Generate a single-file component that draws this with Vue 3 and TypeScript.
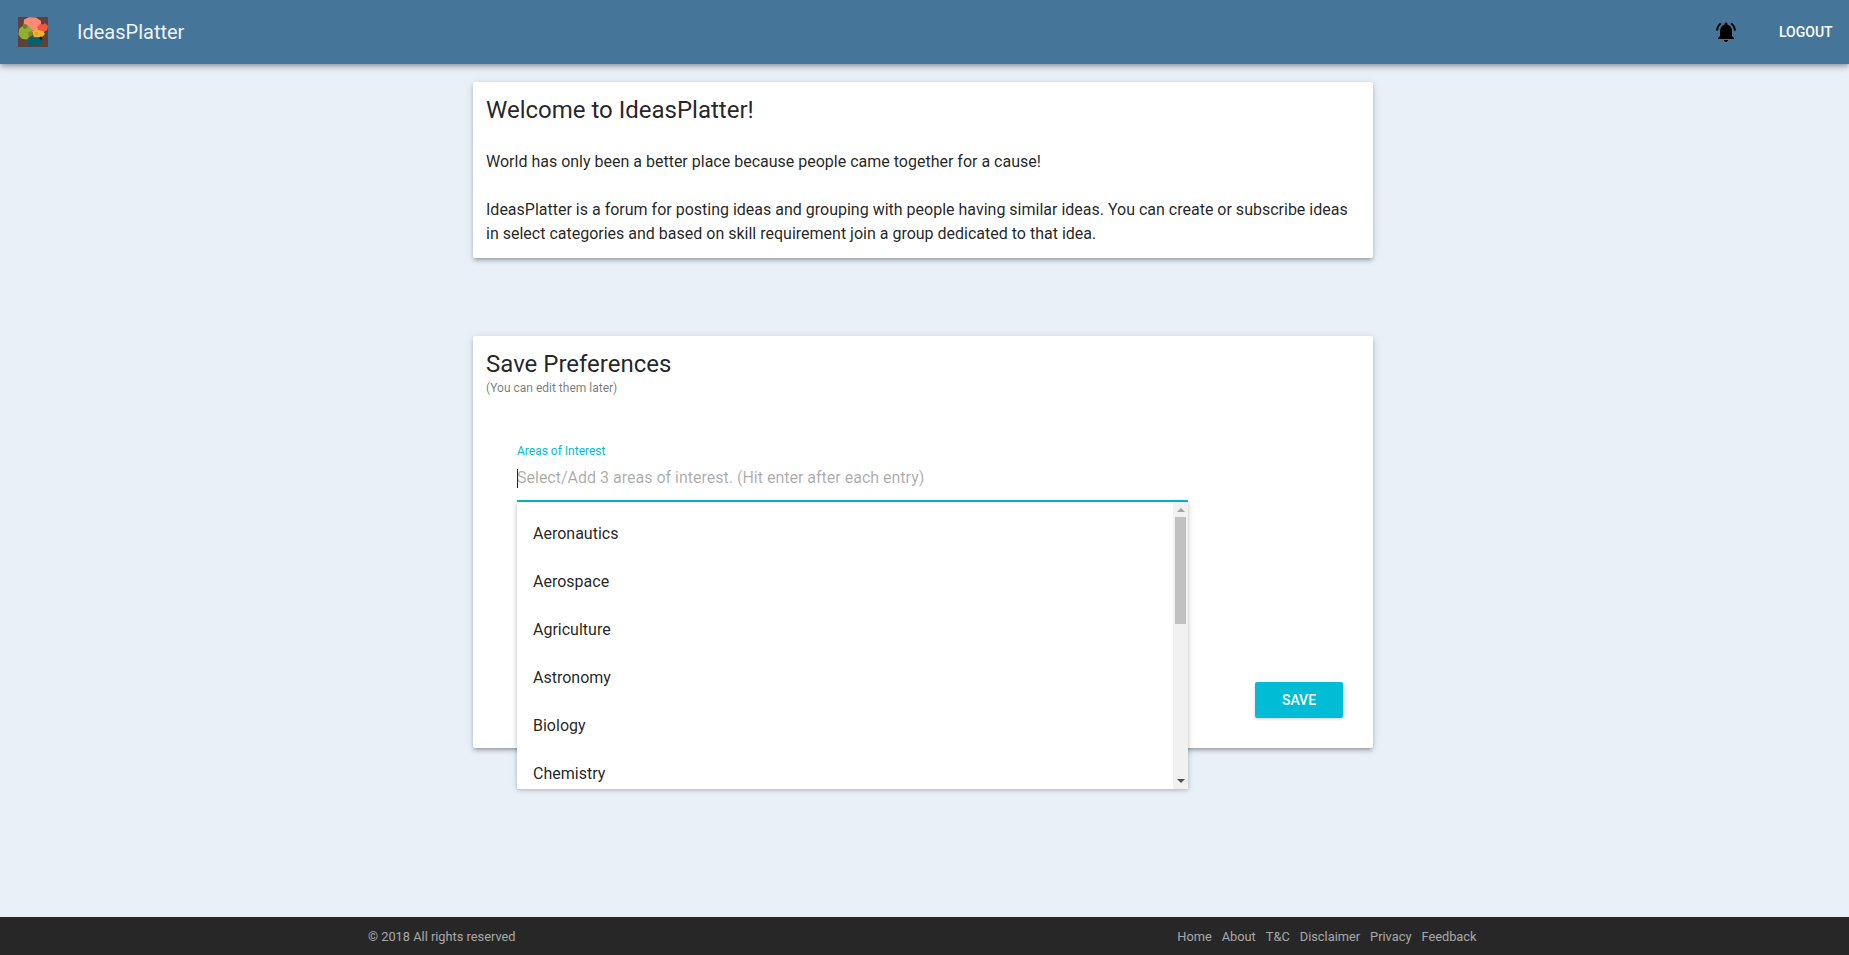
<script setup lang="ts">
const categories: string[] = ['Aeronautics', 'Aerospace', 'Agriculture', 'Astronomy', 'Biology', 'Chemistry']
const links: string[] = ['Home', 'About', 'T&C', 'Disclaimer', 'Privacy', 'Feedback']
</script>

<template>
  <div class="page">
    <header class="bar">
      <svg class="logo" width="30" height="30" viewBox="0 0 30 30">
        <rect width="30" height="30" fill="#5d4040" />
        <path d="M6 2.5 11 0.3 18 0.5 23 4 23 9 20 13 10 14 5.5 9Z" fill="#ff8a75" />
        <path d="M19 10 22 7 25 7.5 27 6 30 9 29 13 25.5 15.5 21 14Z" fill="#f4573c" />
        <path d="M1 12 5 8.5 10 8 14 13 13 18 9 22.5 4 22 0.5 18Z" fill="#8fb02f" />
        <circle cx="7" cy="9.5" r="2.4" fill="#7c7a28" />
        <path d="M14 14 18 12.5 25 14 27 17 24 20 16 20.5Z" fill="#f0b42f" />
        <circle cx="12.5" cy="17" r="2.4" fill="#84842a" />
        <circle cx="18.5" cy="16.5" r="1.8" fill="#e39a2a" />
        <path d="M10 23 13 20 20 20.5 24 21 24 25 22 29 11 29.3 9 26Z" fill="#05606e" />
        <circle cx="23" cy="21" r="1.6" fill="#1a1a1a" />
      </svg>
      <div class="brand">IdeasPlatter</div>
      <div class="spacer"></div>
      <svg class="bell" width="24" height="24" viewBox="0 0 24 24">
        <path
          fill="#000"
          d="M7.58 4.08 6.15 2.65C3.75 4.48 2.17 7.3 2.03 10.5h2c.15-2.65 1.51-4.97 3.55-6.42zM19.97 10.5h2c-.15-3.2-1.73-6.02-4.12-7.85l-1.42 1.43c2.02 1.45 3.39 3.77 3.54 6.42zM18 11c0-3.07-1.64-5.64-4.5-6.32V4c0-.83-.67-1.5-1.5-1.5s-1.5.67-1.5 1.5v.68C7.63 5.36 6 7.92 6 11v5l-2 2v1h16v-1l-2-2v-5zm-6 11c.14 0 .27-.01.4-.04.65-.14 1.18-.58 1.44-1.18.1-.24.15-.5.15-.78h-4c.01 1.1.9 2 2.01 2z"
        />
      </svg>
      <div class="logout">LOGOUT</div>
    </header>

    <main class="main">
      <section class="card welcome">
        <h2 class="title">Welcome to IdeasPlatter!</h2>
        <p class="copy">World has only been a better place because people came together for a cause!</p>
        <p class="copy">IdeasPlatter is a forum for posting ideas and grouping with people having similar ideas. You can create or subscribe ideas in select categories and based on skill requirement join a group dedicated to that idea.</p>
      </section>

      <section class="card prefs">
        <h2 class="title">Save Preferences</h2>
        <div class="hint">(You can edit them later)</div>
        <div class="field">
          <div class="label">Areas of Interest</div>
          <div class="input"><span class="caret"></span>Select/Add 3 areas of interest. (Hit enter after each entry)</div>
          <div class="menu">
            <ul class="list">
              <li v-for="c in categories" :key="c" class="item">{{ c }}</li>
            </ul>
            <div class="track">
              <span class="arrow up"></span>
              <span class="thumb"></span>
              <span class="arrow down"></span>
            </div>
          </div>
        </div>
        <div class="actions"><div class="save">SAVE</div></div>
      </section>
    </main>

    <footer class="foot">
      <div class="copyr">© 2018 All rights reserved</div>
      <nav class="links"><span v-for="l in links" :key="l">{{ l }}</span></nav>
    </footer>
  </div>
</template>

<style>
html, body { margin: 0; background: #e9f0f8; }
</style>

<style scoped>
.page {
  height: 955px;
  display: flex;
  flex-direction: column;
  overflow: hidden;
  background: #e9f0f8;
  font-family: Roboto, "Liberation Sans", sans-serif;
  color: rgba(0, 0, 0, 0.87);
}
.bar {
  height: 64px;
  flex: none;
  display: flex;
  align-items: center;
  background: #457599;
  color: #fff;
  padding: 0 17px 0 18px;
  box-shadow: 0 2px 4px -1px rgba(0,0,0,.2), 0 4px 5px 0 rgba(0,0,0,.14), 0 1px 10px 0 rgba(0,0,0,.12);
  position: relative;
  z-index: 2;
}
.logo { flex: none; }
.brand { margin-left: 29px; font-size: 20px; font-weight: 400; color: #eef4f8; }
.spacer { flex: 1; }
.bell { margin-right: 41px; }
.logout { font-size: 14px; font-weight: 500; width: 53px; white-space: nowrap; }
.main {
  flex: 1;
  display: flex;
  flex-direction: column;
  align-items: center;
  padding: 18px 3px 0 0;
  gap: 78px;
}
.card {
  width: 900px;
  box-sizing: border-box;
  background: #fff;
  border-radius: 2px;
  padding: 14px 13px 0;
  box-shadow: 0 3px 3px -2px rgba(0,0,0,.2), 0 3px 4px 0 rgba(0,0,0,.14), 0 1px 8px 0 rgba(0,0,0,.12);
}
.welcome { height: 176px; }
.prefs { height: 412px; display: flex; flex-direction: column; }
.title { margin: 0; font-size: 24px; font-weight: 400; line-height: 28px; color: rgba(0,0,0,.87); }
.copy { margin: 0; font-size: 16px; line-height: 24px; color: rgba(0,0,0,.87); }
.welcome .title { margin-bottom: 26px; }
.welcome .copy + .copy { margin-top: 24px; }
.hint { font-size: 12px; line-height: 14px; color: rgba(0,0,0,.54); margin-top: 3px; }
.field { position: relative; margin: 49px 0 0 31px; width: 671px; }
.label { font-size: 12px; line-height: 14px; color: #00bcd4; }
.input {
  position: relative;
  height: 34px;
  margin-top: 8px;
  line-height: 24px;
  font-size: 16px;
  color: rgba(0,0,0,.34);
  border-bottom: 2px solid #00bcd4;
}
.caret { position: absolute; left: 0; top: 3px; width: 1px; height: 19px; background: #222; }
.menu {
  position: absolute;
  left: 0;
  top: 58px;
  width: 671px;
  height: 287px;
  display: flex;
  background: #fff;
  overflow: hidden;
  box-shadow: 0 1px 6px rgba(0,0,0,.16), 0 1px 4px rgba(0,0,0,.12);
  z-index: 3;
}
.list { flex: 1; list-style: none; margin: 0; padding: 8px 0 0; }
.item { height: 48px; line-height: 48px; padding: 0 16px; font-size: 16px; color: rgba(0,0,0,.87); }
.track {
  width: 15px;
  flex: none;
  background: #f1f1f1;
  position: relative;
}
.thumb { position: absolute; left: 2px; top: 15px; width: 11px; height: 107px; background: #c1c1c1; }
.arrow { position: absolute; left: 3.5px; width: 0; height: 0; border-left: 4px solid transparent; border-right: 4px solid transparent; }
.up { top: 6px; border-bottom: 4px solid #a3a3a3; }
.down { bottom: 6px; border-top: 4px solid #505050; }
.actions { margin-top: auto; display: flex; justify-content: flex-end; padding: 0 17px 30px 0; }
.save {
  width: 88px;
  height: 36px;
  line-height: 36px;
  text-align: center;
  font-size: 14px;
  font-weight: 500;
  color: #fff;
  background: #00bcd4;
  border-radius: 2px;
  box-shadow: 0 1px 3px rgba(0,0,0,.2);
}
.foot {
  height: 38px;
  flex: none;
  background: #272727;
  color: rgba(255,255,255,.6);
  font-size: 12.8px;
  display: flex;
  align-items: center;
  justify-content: space-between;
  padding: 0 372.5px 0 368px;
}
.links { display: flex; gap: 10px; }
</style>
